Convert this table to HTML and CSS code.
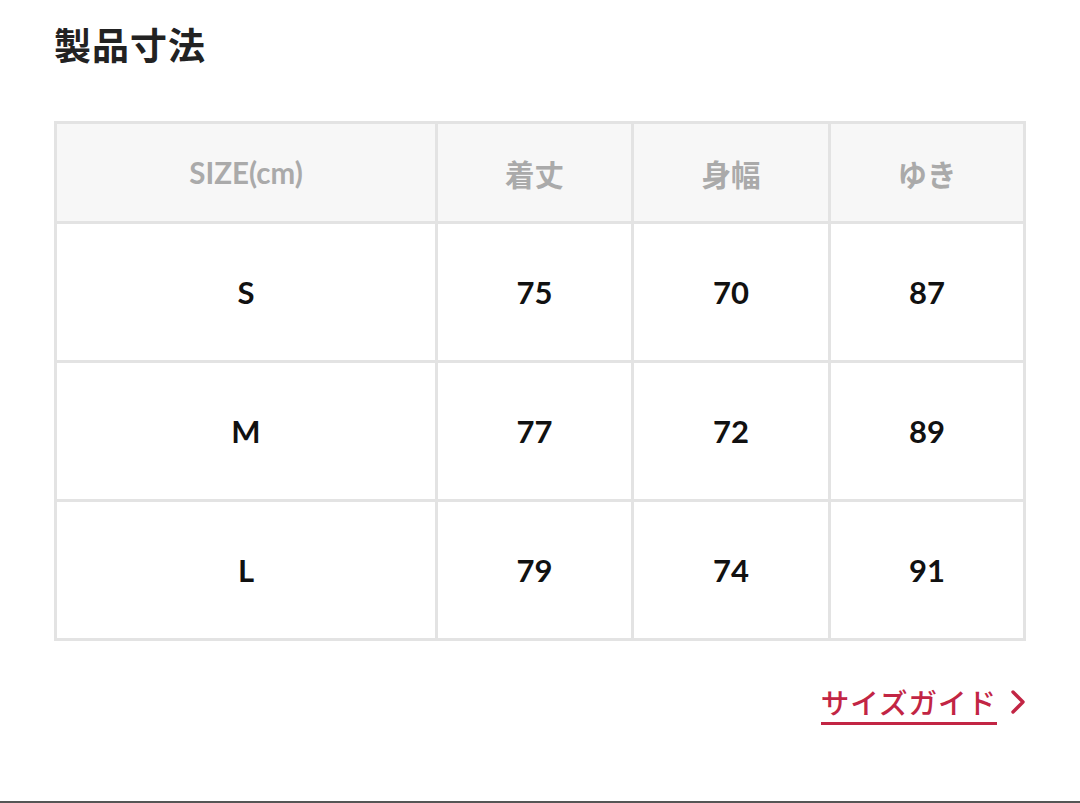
FILE: index.html
```html
<!DOCTYPE html>
<html lang="ja">
<head>
<meta charset="utf-8">
<link rel="stylesheet" href="styles.css">
</head>
<body>
<div class="page">
  <h2 class="title">製品寸法</h2>
  <table class="size-table">
    <colgroup>
      <col class="c1"><col class="c2"><col class="c3"><col class="c4">
    </colgroup>
    <thead>
      <tr><th>SIZE(cm)</th><th>着丈</th><th>身幅</th><th>ゆき</th></tr>
    </thead>
    <tbody>
      <tr><td>S</td><td>75</td><td>70</td><td>87</td></tr>
      <tr><td>M</td><td>77</td><td>72</td><td>89</td></tr>
      <tr><td>L</td><td>79</td><td>74</td><td>91</td></tr>
    </tbody>
  </table>
  <div class="guide-row">
    <a class="guide" href="#"><span class="guide-text">サイズガイド</span><svg class="chev" width="16" height="26" viewBox="0 0 16 26"><polyline points="3,3 13,13 3,23" fill="none" stroke="#c22544" stroke-width="3.4" stroke-linecap="round" stroke-linejoin="round"/></svg></a>
  </div>
</div>
<div class="bottom-line"></div>
</body>
</html>
```
FILE: styles.css
```css
html, body {
  margin: 0;
  padding: 0;
  background: #fff;
}
body {
  width: 1080px;
  height: 803px;
  position: relative;
  overflow: hidden;
  font-family: Lato, "Noto Sans CJK JP", sans-serif;
}
.page {
  padding: 0 54px;
}
.title {
  margin: 0;
  padding-top: 19px;
  font-family: "Noto Sans CJK JP", sans-serif;
  font-size: 37px;
  font-weight: 700;
  line-height: 50px;
  color: #222;
  letter-spacing: 1px;
}
.size-table {
  margin-top: 52px;
  width: 972px;
  border-collapse: collapse;
  table-layout: fixed;
}
.c1 { width: 381px; }
.c2 { width: 196px; }
.c3 { width: 197px; }
.c4 { width: 195px; }
.size-table th,
.size-table td {
  border: 3px solid #e3e3e3;
  text-align: center;
  vertical-align: middle;
  padding: 0;
}
.size-table th {
  background: #f7f7f7;
  color: #aaa;
  font-size: 29.5px;
  font-weight: 700;
  height: 97px;
}
.size-table td {
  color: #111;
  font-size: 31px;
  font-weight: 700;
  height: 136px;
}
.guide-row {
  display: flex;
  justify-content: flex-end;
  margin-top: 44px;
}
.guide {
  display: flex;
  align-items: center;
  gap: 13px;
  text-decoration: none;
  color: #c22544;
}
.guide-text {
  font-family: "Noto Sans CJK JP", sans-serif;
  font-size: 28.5px;
  font-weight: 500;
  line-height: 34px;
  letter-spacing: 1px;
  border-bottom: 3px solid #c22544;
  padding-bottom: 3px;
}
.chev {
  display: block;
  margin-bottom: 6px;
}
.bottom-line {
  position: absolute;
  left: 0;
  right: 0;
  bottom: 0;
  height: 2px;
  background: #555;
}
```
